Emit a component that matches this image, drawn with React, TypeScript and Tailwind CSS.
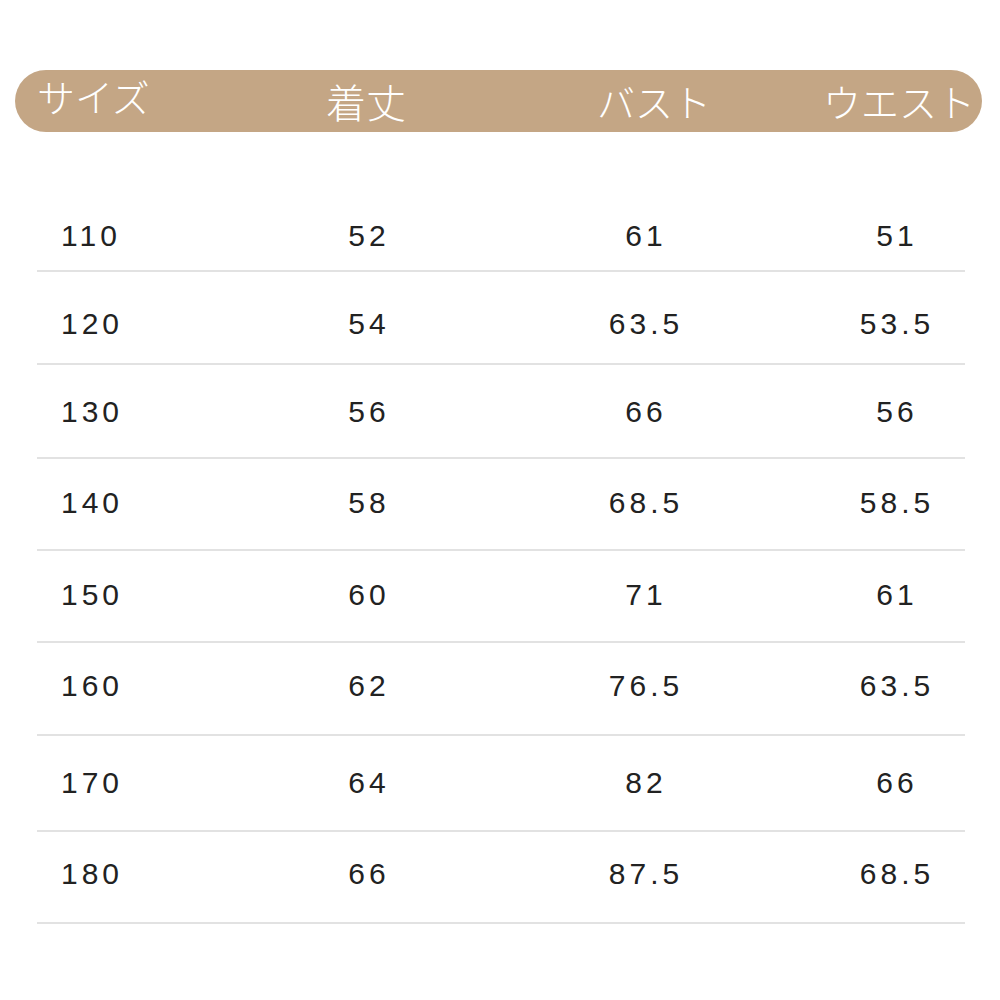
const rows = [
  { size: "110", length: "52", bust: "61", waist: "51", mt: "mt-[218px]", gap: "mb-[16px]" },
  { size: "120", length: "54", bust: "63.5", waist: "53.5", mt: "mt-[34px]", gap: "mb-[21px]" },
  { size: "130", length: "56", bust: "66", waist: "56", mt: "mt-[29px]", gap: "mb-[27px]" },
  { size: "140", length: "58", bust: "68.5", waist: "58.5", mt: "mt-[26px]", gap: "mb-[28px]" },
  { size: "150", length: "60", bust: "71", waist: "61", mt: "mt-[26px]", gap: "mb-[28px]" },
  { size: "160", length: "62", bust: "76.5", waist: "63.5", mt: "mt-[25px]", gap: "mb-[30px]" },
  { size: "170", length: "64", bust: "82", waist: "66", mt: "mt-[29px]", gap: "mb-[29px]" },
  { size: "180", length: "66", bust: "87.5", waist: "68.5", mt: "mt-[24px]", gap: "mb-[30px]" },
];

export default function App() {
  return (
    <div className="relative h-[1000px] w-[1000px] overflow-hidden bg-white">
      <div
        className="absolute left-[15px] top-[70px] flex h-[62px] w-[967px] items-center rounded-full bg-[#c4a685] text-[38px] font-light text-white"
        style={{ fontFamily: '"Noto Sans CJK JP", "Noto Sans", sans-serif' }}
      >
        <span className="ml-[22px] -mt-[10px] w-[289px] shrink-0 leading-none">サイズ</span>
        <span className="w-[271px] shrink-0 text-[40px] leading-none">着丈</span>
        <span className="w-[226px] shrink-0 leading-none">バスト</span>
        <span className="shrink-0 leading-none">ウエスト</span>
      </div>

      <div
        className="ml-[37px] flex w-[928px] flex-col text-[30px] tracking-[4px] text-[#222]"
        style={{ fontFamily: '"Liberation Sans", Arial, sans-serif' }}
      >
        {rows.map((r) => (
          <div key={r.size}>
            <div className={`flex h-[36px] items-center leading-none ${r.mt} ${r.gap}`}>
              <span className="w-[200px] shrink-0 pl-[24px]">{r.size}</span>
              <span className="w-[264px] shrink-0 text-center">{r.length}</span>
              <span className="w-[290px] shrink-0 text-center">{r.bust}</span>
              <span className="w-[212px] shrink-0 text-center">{r.waist}</span>
            </div>
            <div className="h-[2px] bg-[#e2e2e2]" />
          </div>
        ))}
      </div>
    </div>
  );
}
